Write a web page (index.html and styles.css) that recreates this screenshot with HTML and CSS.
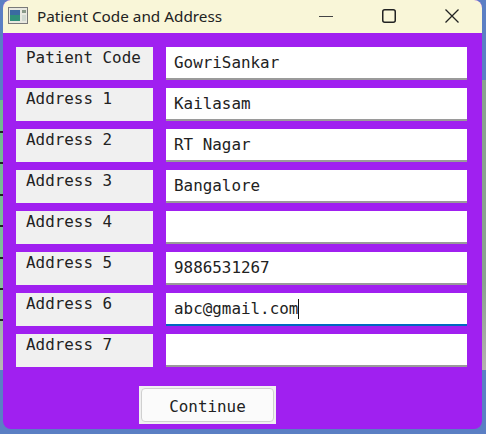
FILE: index.html
```html
<!DOCTYPE html>
<html lang="en">
<head>
    <meta charset="UTF-8">
    <meta name="viewport" content="width=device-width, initial-scale=1.0">
    <title>Patient Code and Address</title>
    <link rel="stylesheet" href="styles.css">
</head>
<body>

    <div class="window">
        <div class="titlebar">
            <svg class="app-icon" width="20" height="17" viewBox="0 0 20 17">
                <rect x="0.5" y="0.5" width="19" height="16" fill="#e8e8e0" stroke="#7a7a7a"/>
                <rect x="2" y="3" width="10" height="11" fill="#2f8f78"/>
                <rect x="2" y="3" width="10" height="5" fill="#3a6aa0"/>
                <rect x="14" y="3" width="4" height="3" fill="#8a9a8a"/>
                <rect x="14" y="8" width="4" height="6" fill="#d0d8d0"/>
            </svg>
            <span class="title">Patient Code and Address</span>
            <div class="controls">
                <svg class="control" width="14" height="14" viewBox="0 0 14 14">
                    <path d="M0 7.5H14" stroke="#444" stroke-width="1.2" fill="none"/>
                </svg>
                <svg class="control" width="14" height="14" viewBox="0 0 14 14">
                    <rect x="0.75" y="0.75" width="12.5" height="12.5" rx="2" stroke="#222" stroke-width="1.5" fill="none"/>
                </svg>
                <svg class="control" width="14" height="14" viewBox="0 0 14 14">
                    <path d="M0.5 0.5L13.5 13.5M13.5 0.5L0.5 13.5" stroke="#222" stroke-width="1.3" fill="none"/>
                </svg>
            </div>
        </div>

        <div class="content">
            <div class="row">
                <div class="label">Patient Code</div>
                <div class="field">GowriSankar</div>
            </div>
            <div class="row">
                <div class="label">Address 1</div>
                <div class="field">Kailasam</div>
            </div>
            <div class="row">
                <div class="label">Address 2</div>
                <div class="field">RT Nagar</div>
            </div>
            <div class="row">
                <div class="label">Address 3</div>
                <div class="field">Bangalore</div>
            </div>
            <div class="row">
                <div class="label">Address 4</div>
                <div class="field"></div>
            </div>
            <div class="row">
                <div class="label">Address 5</div>
                <div class="field">9886531267</div>
            </div>
            <div class="row">
                <div class="label">Address 6</div>
                <div class="field focused">abc@gmail.com<span class="caret"></span></div>
            </div>
            <div class="row">
                <div class="label">Address 7</div>
                <div class="field"></div>
            </div>
            <div class="actions">
                <div class="button-frame">
                    <button class="continue">Continue</button>
                </div>
            </div>
        </div>
    </div>

</body>
</html>
```

FILE: styles.css
```css
body {
    margin: 0;
    height: 434px;
    overflow: hidden;
    background-color: #5b7fc4;
    /* desktop showing round the window: icon ticks, then green on both sides */
    background-image:
        repeating-linear-gradient(to bottom, #222 0, #222 2px, transparent 2px, transparent 31.4px),
        linear-gradient(to bottom, #6fb98f, #7fbf9a 60%, #b9b5b5),
        linear-gradient(to bottom, #8aa38f, #8aa38f 70%, #b5b0b0);
    background-size: 3px 200px, 3px 270px, 4px 290px;
    background-position: 0 131px, 0 100px, 482px 80px;
    background-repeat: no-repeat;
    font-family: "DejaVu Sans Mono", monospace;
}

.window {
    width: 479px;
    height: 429px;
    margin-left: 3px;
    border-radius: 8px;
    overflow: hidden;
    background-color: #a020f0;
    display: flex;
    flex-direction: column;
}

.titlebar {
    height: 33px;
    background-color: #f9f6d8;
    display: flex;
    align-items: center;
    flex-shrink: 0;
    padding-left: 5px;
    padding-bottom: 2px;
    box-sizing: border-box;
}

.app-icon {
    margin-right: 9px;
}

.title {
    font-family: "Noto Sans", sans-serif;
    font-size: 15.3px;
    color: #222;
}

.controls {
    margin-left: auto;
    display: flex;
    gap: 49px;
    padding-right: 23px;
}

.content {
    padding: 14px 15px 0 13px;
}

.row {
    display: flex;
    gap: 13px;
    margin-bottom: 8px;
}

.label {
    width: 137px;
    height: 33px;
    box-sizing: border-box;
    padding: 1px 0 0 10px;
    background-color: #f0f0f0;
    font-size: 15.9px;
    line-height: 20px;
    color: #222;
}

.field {
    flex: 1;
    height: 33px;
    box-sizing: border-box;
    padding-left: 8px;
    background-color: #fff;
    border-bottom: 2px solid #9a9a9a;
    font-size: 15.9px;
    line-height: 32px;
    color: #222;
    white-space: pre;
}

.field.focused {
    border-bottom-color: #0067c0;
}

.caret {
    display: inline-block;
    width: 1px;
    height: 20px;
    background-color: #111;
    vertical-align: -5px;
}

.actions {
    padding: 11px 0 0 123px;
}

.button-frame {
    width: 137px;
    height: 38px;
    box-sizing: border-box;
    padding: 2px;
    background-color: #f0f0f0;
}

.continue {
    width: 100%;
    height: 100%;
    padding: 3px 0 0;
    border: 1px solid #d0d0d0;
    border-radius: 4px;
    background-color: #fbfbfb;
    font-family: "DejaVu Sans Mono", monospace;
    font-size: 15.9px;
    color: #222;
}
```
